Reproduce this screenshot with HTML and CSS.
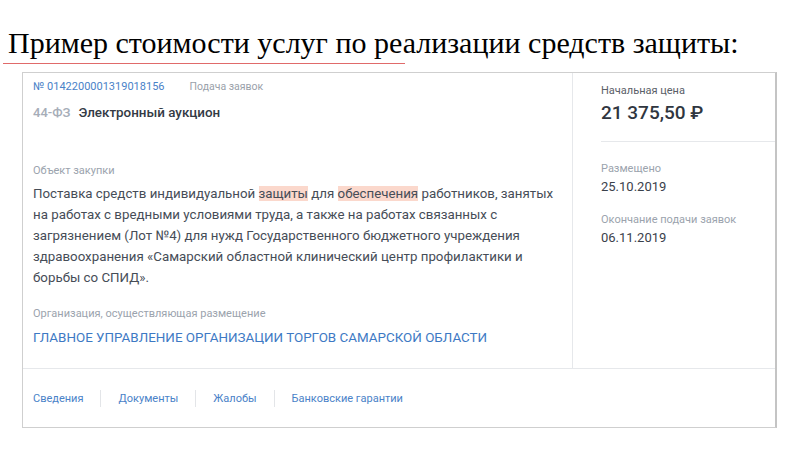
FILE: index.html
```html
<!DOCTYPE html>
<html lang="ru">
<head>
<meta charset="utf-8">
<link rel="stylesheet" href="styles.css">
</head>
<body>
<h1 class="title">Пример стоимости услуг по реализации средств защиты:</h1>
<div class="rule"></div>
<div class="card">
  <div class="main">
    <div class="left">
      <div class="meta"><span class="num">№ 0142200001319018156</span><span class="stage">Подача заявок</span></div>
      <div class="type"><span class="law">44-ФЗ</span><span class="kind">Электронный аукцион</span></div>
      <div class="label obj">Объект закупки</div>
      <p class="desc">Поставка средств индивидуальной <mark>защиты</mark> для <mark>обеспечения</mark> работников, занятых на работах с вредными условиями труда, а также на работах связанных с загрязнением (Лот №4) для нужд Государственного бюджетного учреждения здравоохранения «Самарский областной клинический центр профилактики и борьбы со СПИД».</p>
      <div class="label org-label">Организация, осуществляющая размещение</div>
      <div class="org">ГЛАВНОЕ УПРАВЛЕНИЕ ОРГАНИЗАЦИИ ТОРГОВ САМАРСКОЙ ОБЛАСТИ</div>
    </div>
    <div class="right">
      <div class="price-block">
        <div class="label dark">Начальная цена</div>
        <div class="price">21 375,50 ₽</div>
      </div>
      <div class="dates">
        <div class="label">Размещено</div>
        <div class="date">25.10.2019</div>
        <div class="label end">Окончание подачи заявок</div>
        <div class="date">06.11.2019</div>
      </div>
    </div>
  </div>
  <div class="footer">
    <a class="tab">Сведения</a>
    <span class="sep"></span>
    <a class="tab">Документы</a>
    <span class="sep"></span>
    <a class="tab">Жалобы</a>
    <span class="sep"></span>
    <a class="tab">Банковские гарантии</a>
  </div>
</div>
</body>
</html>
```
FILE: styles.css
```css
* { box-sizing: border-box; }
html, body { margin: 0; padding: 0; background: #fff; }
body { width: 800px; height: 450px; overflow: hidden; }

.title {
  margin: 0;
  padding: 26px 0 0 8px;
  font-family: "Liberation Serif", "Times New Roman", serif;
  font-weight: normal;
  font-size: 30px;
  line-height: 34px;
  color: #000;
  white-space: nowrap;
}
.rule {
  margin: 3px 0 0 3px;
  width: 402px;
  height: 1px;
  background: #e06a6a;
}

.card {
  margin: 8px 0 0 22px;
  width: 755px;
  height: 356px;
  border: 1px solid #cfcfcf;
  border-right: 2px solid #c4c4c4;
  display: flex;
  flex-direction: column;
  font-family: Roboto, "Noto Sans", sans-serif;
}
.main {
  display: flex;
  height: 296px;
  border-bottom: 1px solid #e6e8eb;
}
.left {
  width: 550px;
  padding: 7px 0 0 10px;
  border-right: 1px solid #e6e8eb;
}
.right {
  flex: 1;
  padding: 11px 0 0 28px;
}

.meta { display: flex; align-items: baseline; gap: 25px; font-size: 11px; line-height: 14px; }
.num { color: #4a82c8; }
.stage { color: #9aa1aa; font-size: 10.5px; }
.type { margin-top: 10px; display: flex; gap: 8px; font-size: 13px; line-height: 18px; font-weight: 500; }
.law { color: #a6adb8; }
.kind { color: #333a44; font-size: 13.4px; }

.label { font-size: 11px; line-height: 14px; color: #9ba3ad; }
.label.dark { color: #5a6068; }
.obj { margin-top: 42px; }
.desc {
  margin: 5px 0 0 0;
  width: 532px;
  font-size: 13.3px;
  line-height: 21px;
  color: #464d57;
}
mark { background: #fbd8cc; color: inherit; }
.org-label { margin-top: 19px; }
.org { margin-top: 8px; font-size: 13.4px; line-height: 18px; color: #3d79c4; }

.price-block { border-bottom: 1px solid #e6e8eb; height: 58px; }
.price { margin-top: 3px; font-size: 19px; line-height: 24px; font-weight: 500; color: #2f3640; }
.dates { padding-top: 20px; }
.date { margin-top: 2px; font-size: 13px; line-height: 18px; color: #3a414b; }
.end { margin-top: 17px; }

.footer {
  flex: 1;
  display: flex;
  align-items: center;
  padding: 0 0 0 10px;
  font-size: 11px;
  color: #4a82c8;
}
.tab { color: #4a82c8; text-decoration: none; }
.sep { width: 1px; height: 17px; background: #e3e5e8; margin: 0 17px; }
```
